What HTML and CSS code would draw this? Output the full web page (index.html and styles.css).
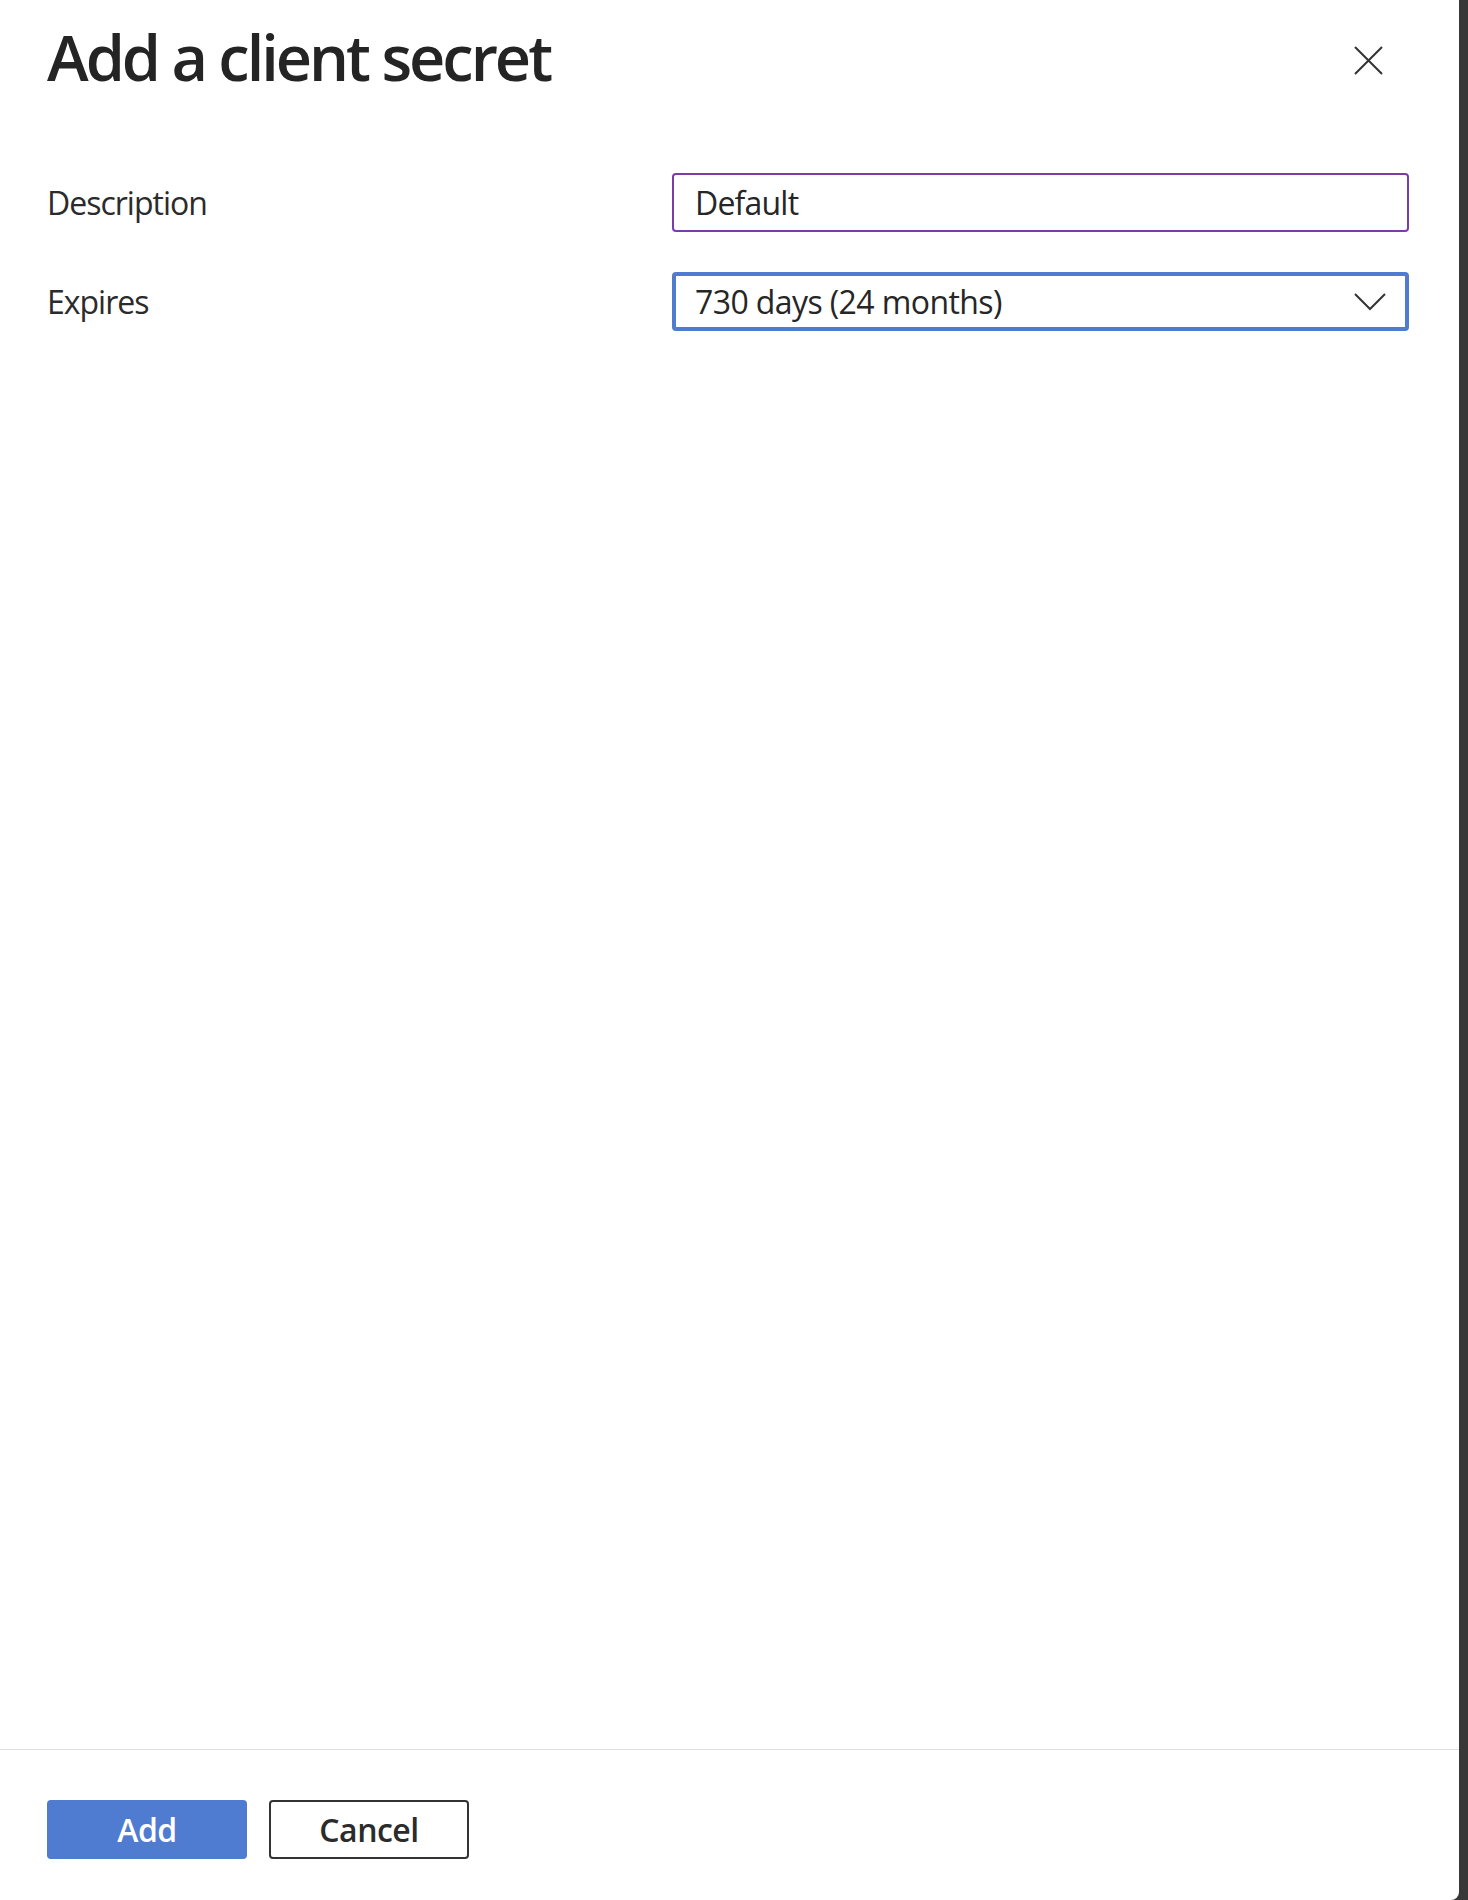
FILE: index.html
```html
<!DOCTYPE html>
<html lang="en">
<head>
	<meta charset="UTF-8">
	<title>Add a client secret</title>
	<link rel="stylesheet" href="styles.css">
</head>
<body>
	<div class="panel">
		<div class="panel-main">
			<div class="panel-header">
				<h1 class="panel-title">Add a client secret</h1>
				<button class="close-btn" aria-label="Close">
					<svg width="29" height="29" viewBox="0 0 29 29">
						<path d="M1 1 L28 28 M28 1 L1 28" stroke="#333" stroke-width="2" fill="none"/>
					</svg>
				</button>
			</div>

			<div class="form">
				<label class="form-label">Description</label>
				<div class="text-input">Default</div>

				<label class="form-label">Expires</label>
				<div class="select-input">
					<span>730 days (24 months)</span>
					<svg class="chevron" width="32" height="18" viewBox="0 0 32 18">
						<path d="M1 1 L16 16 L31 1" stroke="#333" stroke-width="2" fill="none"/>
					</svg>
				</div>
			</div>
		</div>

		<div class="panel-footer">
			<button class="btn btn-primary">Add</button>
			<button class="btn btn-default">Cancel</button>
		</div>
	</div>
</body>
</html>
```

FILE: styles.css
```css
html, body {
	margin: 0;
	padding: 0;
}
body {
	width: 1468px;
	height: 1900px;
	background: #383838;
	font-family: "Open Sans", "Noto Sans", sans-serif;
	color: #262626;
}
.panel {
	width: 1459px;
	height: 1900px;
	background: #fff;
	border-bottom-right-radius: 8px;
	display: flex;
	flex-direction: column;
}
.panel-main {
	flex: 1;
	padding: 0 50px 0 47px;
}
.panel-header {
	display: flex;
	justify-content: space-between;
	align-items: flex-start;
	padding-top: 17px;
}
.panel-title {
	margin: 0;
	font-size: 63px;
	font-weight: 600;
	letter-spacing: -3px;
	line-height: 80px;
	color: #242424;
}
.close-btn {
	margin: 29px 26px 0 0;
	padding: 0;
	border: none;
	background: none;
	width: 29px;
	height: 29px;
	display: block;
}
.close-btn svg {
	display: block;
}
.form {
	margin-top: 76px;
	display: grid;
	grid-template-columns: 625px 1fr;
	row-gap: 40px;
	align-items: center;
}
.form-label {
	font-size: 32px;
	letter-spacing: -1px;
	color: #2b2b2b;
}
.text-input {
	height: 59px;
	box-sizing: border-box;
	border: 2px solid #7b3ca8;
	border-radius: 4px;
	padding-left: 21px;
	font-size: 32px;
	letter-spacing: -0.8px;
	display: flex;
	align-items: center;
}
.select-input {
	height: 59px;
	box-sizing: border-box;
	border: 4px solid #4f7bd1;
	border-radius: 4px;
	padding: 0 19px 0 19px;
	font-size: 32px;
	letter-spacing: -0.6px;
	display: flex;
	align-items: center;
	justify-content: space-between;
}
.chevron {
	display: block;
}
.panel-footer {
	border-top: 1px solid #e0e0e0;
	padding: 50px 0 41px 47px;
	display: flex;
	gap: 22px;
}
.btn {
	width: 200px;
	height: 59px;
	box-sizing: border-box;
	border-radius: 4px;
	font-family: "Open Sans", "Noto Sans", sans-serif;
	font-size: 32px;
	font-weight: 600;
	letter-spacing: -0.5px;
	padding: 0;
}
.btn-primary {
	background: #4f7bd1;
	border: none;
	color: #fff;
}
.btn-default {
	background: #fff;
	border: 2px solid #333;
	color: #2b2b2b;
}
```
